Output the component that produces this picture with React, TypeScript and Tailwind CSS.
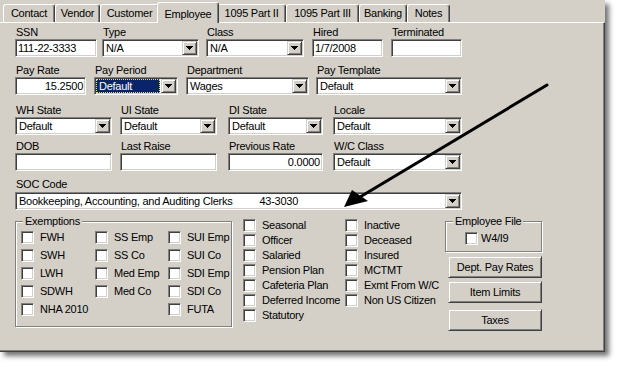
import type { ReactNode } from 'react';

const sunken =
    'border border-t-[#808080] border-l-[#808080] border-r-white border-b-white bg-white shadow-[inset_1px_1px_0_#404040,inset_-1px_-1px_0_#d4d0c8]';
const raised =
    'border border-t-[#d4d0c8] border-l-[#d4d0c8] border-r-[#404040] border-b-[#404040] bg-[#d4d0c8] shadow-[inset_1px_1px_0_#ffffff,inset_-1px_-1px_0_#808080]';
const etched = 'border border-[#808080] shadow-[inset_1px_1px_0_#ffffff,1px_1px_0_#ffffff]';

function Caret() {
    return (
        <svg width="7" height="4" viewBox="0 0 7 4" shapeRendering="crispEdges">
            <rect x="0" y="0" width="7" height="1" />
            <rect x="1" y="1" width="5" height="1" />
            <rect x="2" y="2" width="3" height="1" />
            <rect x="3" y="3" width="1" height="1" />
        </svg>
    );
}

function Combo({ value = '', className = '', focused = false }: { value?: ReactNode; className?: string; focused?: boolean }) {
    return (
        <div className={`${sunken} flex h-[18px] p-px ${className}`}>
            {focused ? (
                <div className="mr-[1px] flex flex-1 items-center bg-[#0a246a] pl-[3px] text-white outline-1 -outline-offset-1 outline-dotted outline-[#e8d8a0]">
                    {value}
                </div>
            ) : (
                <div className="flex flex-1 items-center overflow-hidden whitespace-nowrap pl-[2px]">{value}</div>
            )}
            <div className={`${raised} flex w-[15px] shrink-0 items-center justify-center`}>
                <Caret />
            </div>
        </div>
    );
}

function TextBox({ value = '', right = false }: { value?: string; right?: boolean }) {
    return (
        <div className={`${sunken} flex h-[18px] items-center whitespace-nowrap px-[2px] ${right ? 'justify-end' : ''}`}>
            {value}
        </div>
    );
}

function Field({ label, className, children }: { label: string; className: string; children: ReactNode }) {
    return (
        <div className={`flex flex-col ${className}`}>
            <div className="h-[13px] whitespace-nowrap pl-px leading-[13px]">{label}</div>
            {children}
        </div>
    );
}

function Check({ label, className = '' }: { label: string; className?: string }) {
    return (
        <div className={`flex items-center ${className}`}>
            <div className={`${sunken} h-[13px] w-[13px] shrink-0`} />
            <span className="ml-[6px] whitespace-nowrap leading-[13px]">{label}</span>
        </div>
    );
}

function Button({ label, className }: { label: string; className: string }) {
    return (
        <div className={`${raised} flex h-[22px] w-[94px] items-center justify-center ${className}`}>{label}</div>
    );
}

const tabs = [
    { name: 'Contact', w: 'w-[52px]' },
    { name: 'Vendor', w: 'w-[45px]' },
    { name: 'Customer', w: 'w-[59px]' },
    { name: 'Employee', w: 'w-[62px]', active: true },
    { name: '1095 Part II', w: 'w-[69px]' },
    { name: '1095 Part III', w: 'w-[73px]' },
    { name: 'Banking', w: 'w-[48px]' },
    { name: 'Notes', w: 'w-[43px]' },
];

export default function App() {
    return (
        <div className="relative h-[367px] w-[620px] overflow-hidden bg-white font-['Liberation_Sans',Arial,sans-serif] text-[11px] tracking-[-0.25px] text-black">
            <div className="flex h-[352px] w-[605px] flex-col bg-[#d4d0c8] shadow-[4px_4px_5px_rgba(0,0,0,0.55)]">
                {/* tab strip */}
                <div className="flex h-[22px] shrink-0 items-end pl-[3px]">
                    {tabs.map((tab) =>
                        tab.active ? (
                            <div
                                key={tab.name}
                                className={`relative z-10 -mx-[2px] -mb-px flex h-[21px] items-start justify-center rounded-t-[3px] border-l border-r border-t border-l-white border-r-[#404040] border-t-white bg-[#d4d0c8] pt-[3px] shadow-[inset_-1px_0_0_#808080] ${tab.w}`}
                            >
                                {tab.name}
                            </div>
                        ) : (
                            <div
                                key={tab.name}
                                className={`flex h-[18px] items-center justify-center rounded-t-[3px] border-l border-r border-t border-l-white border-r-[#404040] border-t-white shadow-[inset_-1px_0_0_#808080] ${tab.w}`}
                            >
                                {tab.name}
                            </div>
                        ),
                    )}
                </div>

                {/* tab page */}
                <div className="flex-1 border-b border-r border-t border-b-[#404040] border-r-[#404040] border-t-white pl-[15px] pt-[3px] shadow-[inset_-1px_-1px_0_#808080]">
                    <div className="flex">
                        <Field label="SSN" className="w-[82px]">
                            <TextBox value="111-22-3333" />
                        </Field>
                        <Field label="Type" className="ml-[5px] w-[97px]">
                            <Combo value="N/A" />
                        </Field>
                        <Field label="Class" className="ml-[7px] w-[98px]">
                            <Combo value="N/A" />
                        </Field>
                        <Field label="Hired" className="ml-[8px] w-[71px]">
                            <TextBox value="1/7/2008" />
                        </Field>
                        <Field label="Terminated" className="ml-[8px] w-[71px]">
                            <TextBox />
                        </Field>
                    </div>

                    <div className="mt-[7px] flex">
                        <Field label="Pay Rate" className="w-[71px]">
                            <TextBox value="15.2500" right />
                        </Field>
                        <Field label="Pay Period" className="ml-[8px] w-[84px]">
                            <Combo value="Default" focused />
                        </Field>
                        <Field label="Department" className="ml-[8px] w-[123px]">
                            <Combo value="Wages" />
                        </Field>
                        <Field label="Pay Template" className="ml-[7px] w-[146px]">
                            <Combo value="Default" />
                        </Field>
                    </div>

                    <div className="mt-[9px] flex">
                        <Field label="WH State" className="w-[97px]">
                            <Combo value="Default" />
                        </Field>
                        <Field label="UI State" className="ml-[8px] w-[97px]">
                            <Combo value="Default" />
                        </Field>
                        <Field label="DI State" className="ml-[11px] w-[95px]">
                            <Combo value="Default" />
                        </Field>
                        <Field label="Locale" className="ml-[10px] w-[129px]">
                            <Combo value="Default" />
                        </Field>
                    </div>

                    <div className="mt-[5px] flex">
                        <Field label="DOB" className="w-[97px]">
                            <TextBox />
                        </Field>
                        <Field label="Last Raise" className="ml-[8px] w-[97px]">
                            <TextBox />
                        </Field>
                        <Field label="Previous Rate" className="ml-[11px] w-[95px]">
                            <TextBox value="0.0000" right />
                        </Field>
                        <Field label="W/C Class" className="ml-[10px] w-[129px]">
                            <Combo value="Default" />
                        </Field>
                    </div>

                    <div className="mt-[7px] flex w-[447px] flex-col">
                        <div className="h-[14px] pl-px leading-[13px]">SOC Code</div>
                        <Combo
                            value={
                                <>
                                    <span>Bookkeeping, Accounting, and Auditing Clerks</span>
                                    <span className="ml-[27px]">43-3030</span>
                                </>
                            }
                        />
                    </div>

                    <div className="mt-[8px] flex items-start">
                        {/* exemptions */}
                        <div className={`relative mt-[3px] h-[106px] w-[217px] ${etched}`}>
                            <div className="absolute -top-[7px] left-[7px] bg-[#d4d0c8] px-[2px] leading-[13px]">Exemptions</div>
                            <div className="grid grid-cols-[74px_73px_auto] gap-y-[5px] pl-[5px] pt-[9px]">
                                <Check label="FWH" />
                                <Check label="SS Emp" />
                                <Check label="SUI Emp" />
                                <Check label="SWH" />
                                <Check label="SS Co" />
                                <Check label="SUI Co" />
                                <Check label="LWH" />
                                <Check label="Med Emp" />
                                <Check label="SDI Emp" />
                                <Check label="SDWH" />
                                <Check label="Med Co" />
                                <Check label="SDI Co" />
                                <Check label="NHA 2010" />
                                <Check label="FUTA" className="col-start-3" />
                            </div>
                        </div>

                        {/* flags */}
                        <div className="ml-[11px] flex">
                            <div className="flex w-[102px] flex-col">
                                {['Seasonal', 'Officer', 'Salaried', 'Pension Plan', 'Cafeteria Plan', 'Deferred Income', 'Statutory'].map((l) => (
                                    <Check key={l} label={l} className="h-[15px]" />
                                ))}
                            </div>
                            <div className="flex w-[100px] flex-col">
                                {['Inactive', 'Deceased', 'Insured', 'MCTMT', 'Exmt From W/C', 'Non US Citizen'].map((l) => (
                                    <Check key={l} label={l} className="h-[15px]" />
                                ))}
                            </div>
                        </div>

                        {/* employee file + buttons */}
                        <div className="mt-[3px] flex flex-col">
                            <div className={`relative h-[31px] w-[97px] pl-[19px] pt-[10px] ${etched}`}>
                                <div className="absolute -top-[7px] left-[7px] bg-[#d4d0c8] px-[2px] leading-[13px]">Employee File</div>
                                <div className="flex items-center">
                                    <div className={`${sunken} h-[13px] w-[13px] shrink-0`} />
                                    <span className="ml-[3px] leading-[13px]">W4/I9</span>
                                </div>
                            </div>
                            <Button label="Dept. Pay Rates" className="ml-[3px] mt-[4px]" />
                            <Button label="Item Limits" className="ml-[3px] mt-[3px]" />
                            <Button label="Taxes" className="ml-[3px] mt-[6px]" />
                        </div>
                    </div>
                </div>
            </div>

            {/* annotation arrow */}
            <svg className="pointer-events-none absolute left-0 top-0" width="620" height="367" viewBox="0 0 620 367">
                <line x1="547" y1="85" x2="360" y2="197" stroke="#000" strokeWidth="3" strokeLinecap="round" />
                <polygon points="344,207 352,190 368,201" fill="#000" />
            </svg>
        </div>
    );
}
